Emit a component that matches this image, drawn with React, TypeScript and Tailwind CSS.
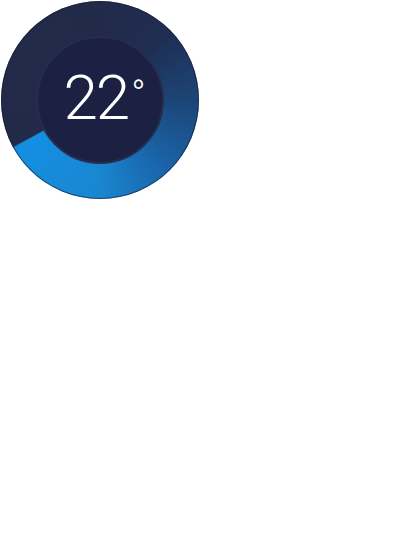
export default function App() {
  return (
    <div className="w-[400px] h-[533px] bg-white">
      <div className="pl-[1px] pt-[1px]">
        {/* Dial */}
        <div className="w-[198px] h-[198px] rounded-full flex items-center justify-center bg-[conic-gradient(from_0deg,#222a4a_0deg,#1f2e52_45deg,#1c4577_90deg,#1a63a8_135deg,#1a86d0_180deg,#138fe2_241deg,#232a49_242deg,#222a4a_360deg)] shadow-[inset_0_0_0_1px_rgba(20,25,50,0.6)]">
          <div className="w-[128px] h-[128px] rounded-full bg-[#1c2143] border-2 border-[#272d4d] flex items-center justify-center">
            <div className="flex items-start text-white font-light font-['Roboto',sans-serif] pl-[9px] pb-[4px]">
              <span className="text-[62px] leading-none tracking-[-2px]">22</span>
              <span className="text-[38px] leading-none ml-[3px] mt-[9px]">°</span>
            </div>
          </div>
        </div>
      </div>
    </div>
  );
}
